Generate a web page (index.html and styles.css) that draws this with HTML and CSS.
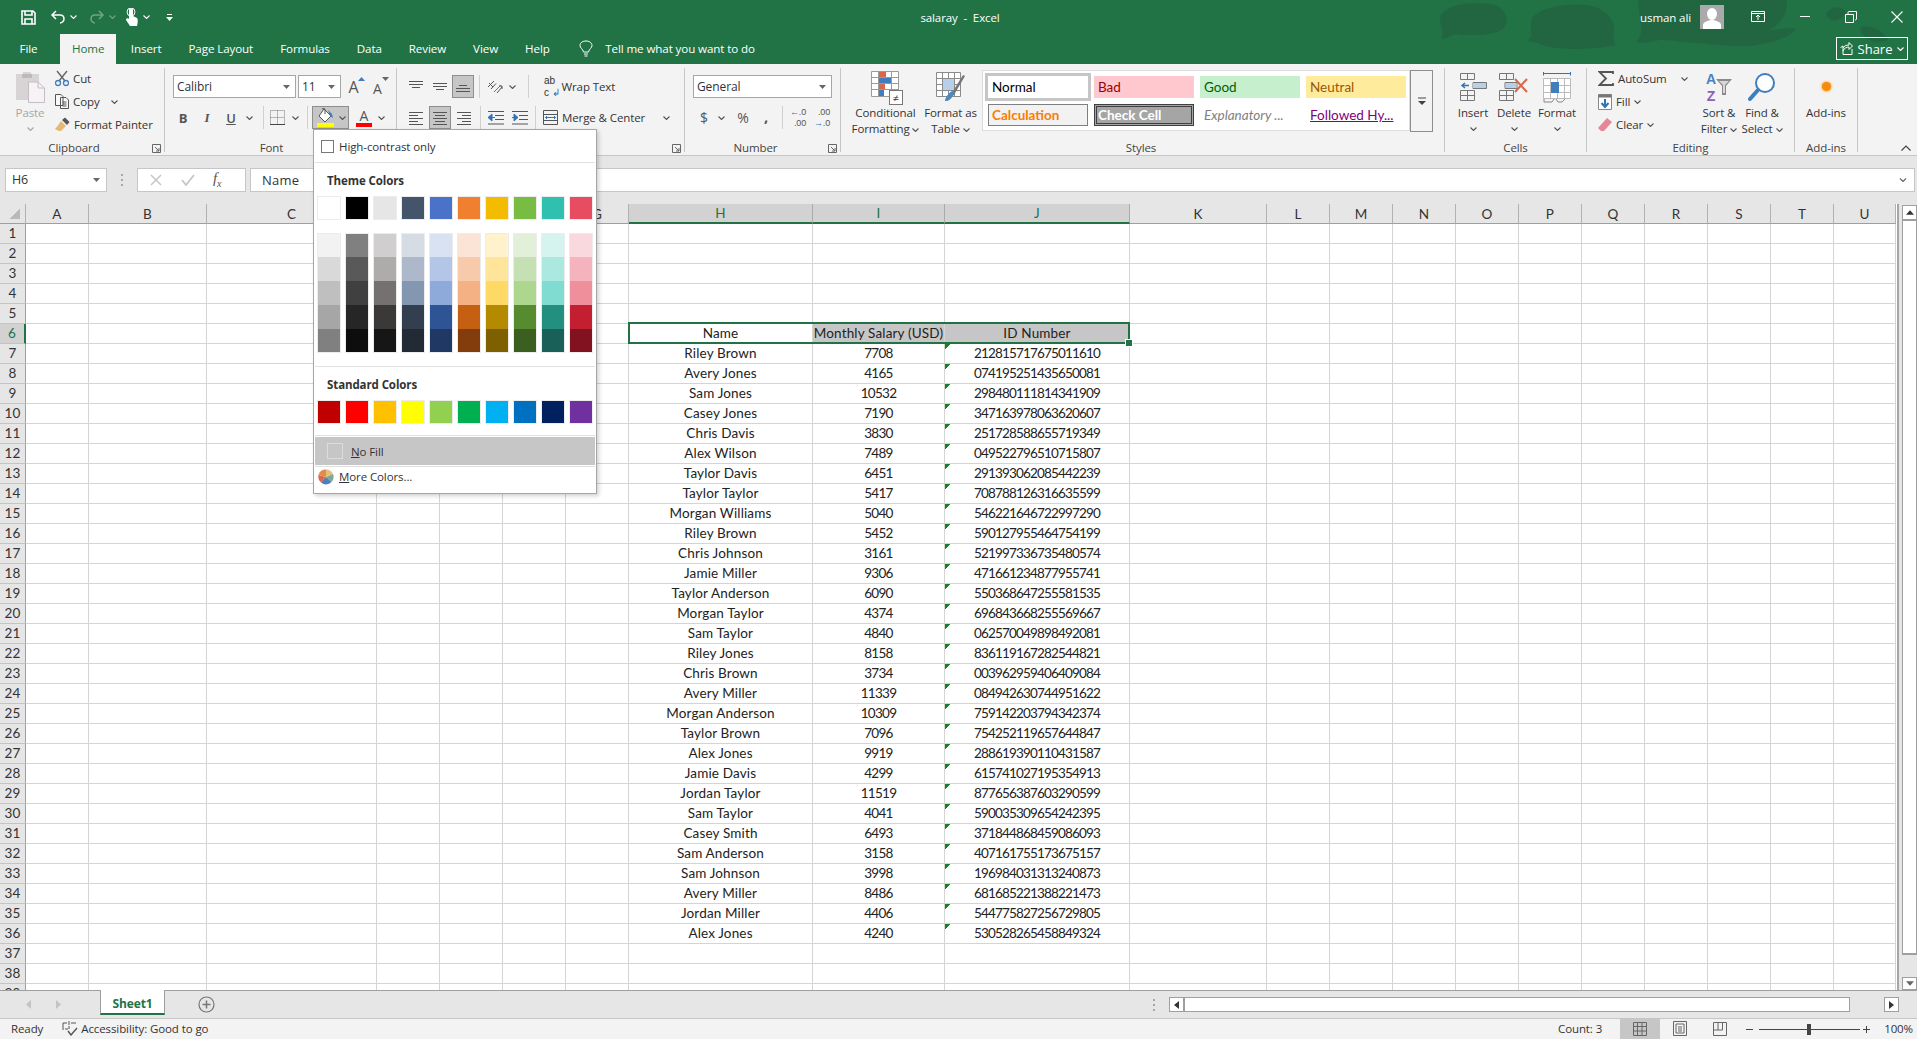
FILE: index.html
```html
<!DOCTYPE html>
<html lang="en">
<head>
    <meta charset="UTF-8">
    <title>salaray - Excel</title>
    <link rel="stylesheet" href="styles.css">
</head>
<body>

<svg class="sprite">
    <symbol id="chev" viewBox="0 0 7 4"><path d="M.5.5 3.5 3.5 6.5.5" fill="none" stroke="currentColor" stroke-width="1.1"/></symbol>
    <symbol id="launch" viewBox="0 0 9 9"><path d="M.5 8.5V.5H8.5V8.5Z M3 3 7 7 M7 4V7H4" fill="none" stroke="#666"/></symbol>
    <symbol id="tri" viewBox="0 0 7 4"><path d="M0 4 3.5 0 7 4Z" fill="currentColor"/></symbol>
    <symbol id="drop" viewBox="0 0 7 4"><path d="M0 0H7L3.5 4Z" fill="#666"/></symbol>
</svg>

<!-- Green header -->
<header class="head">
    <svg class="blobs" width="1917" height="64" viewBox="0 0 1917 64">
        <path d="M1440 18C1444 4 1470 2 1490 4 1506 6 1510 20 1504 28 1496 36 1470 36 1456 34 1448 37 1444 40 1441 38 1445 34 1440 26 1440 18Z"/>
        <path d="M1531 22C1534 8 1560 4 1585 5 1606 7 1615 20 1614 30 1612 42 1618 48 1612 46 1590 50 1560 50 1545 46 1538 42 1530 42 1527 40 1534 38 1530 30 1531 22Z"/>
        <path d="M1638 0H1786C1790 10 1780 26 1768 30 1780 30 1790 27 1796 29 1790 38 1770 43 1750 46 1720 47 1680 40 1660 40 1650 42 1640 44 1636 42 1642 36 1642 30 1640 20 1636 10 1638 0Z"/>
        <path d="M1826 14C1832 5 1842 6 1846 12 1842 22 1830 24 1826 14ZM1860 28C1864 24 1880 26 1888 40 1876 44 1864 42 1860 28Z"/>
    </svg>
    <div class="titlebar">
        <div class="qat">
            <svg class="qat-save" width="15" height="15" viewBox="0 0 15 15"><path d="M1 1H12L14 3V14H1Z M4 1V5H11V1 M4 14V9H11V14" fill="none" stroke="#fff" stroke-width="1.6"/></svg>
            <svg class="qat-undo" width="16" height="14" viewBox="0 0 16 14"><path d="M6 1 2 5 6 9 M2 5H10C13 5 14 7 14 9 14 11 12 13 10 13" fill="none" stroke="#fff" stroke-width="1.5"/></svg>
            <svg class="chev qat-chev"><use href="#chev"/></svg>
            <svg class="qat-redo" width="16" height="14" viewBox="0 0 16 14"><path d="M10 1 14 5 10 9 M14 5H6C3 5 2 7 2 9 2 11 4 13 6 13" fill="none" stroke="#6fa588" stroke-width="1.5"/></svg>
            <svg class="chev qat-chev dim"><use href="#chev"/></svg>
            <svg class="qat-touch" width="14" height="19" viewBox="0 0 14 19"><path d="M4 2C4 0 8 0 8 2V8L12 10C13 11 13 14 12 18H5L1 12C1 10 3 10 4 11Z" fill="#fff"/><circle cx="6" cy="4" r="4" fill="none" stroke="#fff" stroke-width="1"/></svg>
            <svg class="chev qat-chev"><use href="#chev"/></svg>
            <svg class="qat-more" width="7" height="7" viewBox="0 0 7 7"><path d="M1 .5H6" stroke="#fff"/><path d="M0 3H7L3.5 7Z" fill="#fff"/></svg>
        </div>
        <div class="doc-title">salaray &nbsp;-&nbsp; Excel</div>
        <div class="account">
            <span class="user-name">usman ali</span>
            <svg class="avatar" width="24" height="24" viewBox="0 0 24 24"><rect width="24" height="24" fill="#aaa"/><ellipse cx="12" cy="9" rx="5" ry="6" fill="#fff"/><path d="M3 24V20C3 17 8 16 10 15H14C16 16 21 17 21 20V24Z" fill="#fff"/></svg>
            <svg class="win win-display" width="14" height="12" viewBox="0 0 14 12"><path d="M.5 .5H13.5V10.5H.5Z M.5 2.5H13.5 M7 9V4 M5 6 7 4 9 6" fill="none" stroke="#fff"/></svg>
            <svg class="win" width="12" height="12" viewBox="0 0 12 12"><path d="M1 5.500H11" stroke="#fff"/></svg>
            <svg class="win" width="12" height="12" viewBox="0 0 12 12"><path d="M.5 3.500H8.500V11.500H.5Z M3 3V1.500C3 1 3.500 .5 4 .5H11.500V8C11.500 8.500 11 9 10 9" fill="none" stroke="#fff"/></svg>
            <svg class="win" width="12" height="12" viewBox="0 0 12 12"><path d="M.5 .5 11.500 11.500 M11.500 .5 .5 11.500" stroke="#fff" stroke-width="1.1"/></svg>
        </div>
    </div>
    <nav class="tabs">
        <a class="tab">File</a>
        <a class="tab active">Home</a>
        <a class="tab">Insert</a>
        <a class="tab">Page Layout</a>
        <a class="tab">Formulas</a>
        <a class="tab">Data</a>
        <a class="tab">Review</a>
        <a class="tab">View</a>
        <a class="tab">Help</a>
        <svg class="bulb" width="14" height="18" viewBox="0 0 14 18"><path d="M4.500 12C4 9 1 8 1 5.500 1 2.500 4 1 7 1 10 1 13 2.500 13 5.500 13 8 10 9 9.500 12Z M5 14H9 M5.500 16H8.500" fill="none" stroke="#fff"/></svg>
        <span class="tell">Tell me what you want to do</span>
        <button class="share">
            <svg width="13" height="13" viewBox="0 0 13 13"><path d="M.5 5.500 3 4V12.500H12V7 M3 9C4 6 7 5 9 5V7.500L12.500 4 9 .5V3C6 3 4 4 3 6" fill="none" stroke="#fff"/></svg>
            <span>Share</span>
            <svg class="chev"><use href="#chev"/></svg>
        </button>
    </nav>
</header>

<!-- Ribbon -->
<section class="ribbon">

    <div class="group g-clipboard">
        <div class="group-body">
            <div class="big-btn paste">
                <div class="big-icon">
                    <svg width="29" height="32" viewBox="0 0 29 32"><path d="M0 3H7V1H15V3H23V29H0Z" fill="#d8d4d6"/><path d="M6 3H16V7H6Z" fill="#bdb9bb"/><path d="M12.500 11H22L28.500 17V31.500H12.500Z" fill="#f6f2f6" stroke="#c2bec2"/><path d="M22 11V17H28.500" fill="none" stroke="#c2bec2"/></svg>
                </div>
                <span class="big-text">Paste</span>
                <svg class="chev"><use href="#chev"/></svg>
            </div>
            <div class="stack">
                <div class="stack-row">
                    <svg width="14" height="17" viewBox="0 0 14 17"><path d="M2 1 10 11 M12 1 4 11" stroke="#666" stroke-width="1.400"/><circle cx="3" cy="13" r="2.500" fill="none" stroke="#3f7dbd" stroke-width="1.300"/><circle cx="11" cy="13" r="2.500" fill="none" stroke="#3f7dbd" stroke-width="1.300"/></svg>
                    <span>Cut</span>
                </div>
                <div class="stack-row">
                    <svg width="14" height="15" viewBox="0 0 14 15"><path d="M.5 .5H6L8 2.500V11.500H.5Z M5.500 3.500H11L13.500 6V14.500H5.500Z M7.500 8H11.500 M7.500 10H11.500 M7.500 12H11.500" fill="#f8f8f8" stroke="#555"/></svg>
                    <span>Copy</span>
                    <svg class="chev copy-chev"><use href="#chev"/></svg>
                </div>
                <div class="stack-row">
                    <svg width="15" height="15" viewBox="0 0 15 15"><path d="M6 4 11 9 6 14 C4 14.500 2 13 0 12 2 10 4 7 6 4Z" fill="#e5b96f"/><path d="M7 3 10 0.500 14.500 5 12 8Z" fill="#555"/></svg>
                    <span>Format Painter</span>
                </div>
            </div>
        </div>
        <div class="group-label">Clipboard</div>
        <svg class="launcher"><use href="#launch"/></svg>
    </div>

    <div class="group g-font">
        <div class="group-body rows">
            <div class="ctl-row row-top">
                <div class="combo w-font"><span>Calibri</span><svg class="drop"><use href="#drop"/></svg></div>
                <div class="combo w-size"><span>11</span><svg class="drop"><use href="#drop"/></svg></div>
                <div class="btn w-24 font-size grow"><span>A</span><svg class="size-tri up"><use href="#tri"/></svg></div>
                <div class="btn w-24 font-size small"><span>A</span><svg class="size-tri down"><use href="#drop"/></svg></div>
            </div>
            <div class="ctl-row row-bottom">
                <div class="btn w-24 bold">B</div>
                <div class="btn w-24 italic">I</div>
                <div class="btn w-24 underline">U</div>
                <div class="btn w-12"><svg class="chev"><use href="#chev"/></svg></div>
                <i class="sep sep-font1"></i>
                <div class="btn w-22">
                    <svg width="15" height="15" viewBox="0 0 15 15"><path d="M.5 .5H14.500V14.500H.5Z M7.500 .5V14.500 M.5 7.500H14.500" fill="none" stroke="#777" stroke-dasharray="1 1"/><path d="M0 14.500H15" stroke="#444"/></svg>
                </div>
                <div class="btn w-14"><svg class="chev"><use href="#chev"/></svg></div>
                <i class="sep sep-font2"></i>
                <div class="btn fill-btn">
                    <svg width="19" height="19" viewBox="0 0 19 19"><path d="M8 1 15 8 9 14 3 8Z" fill="#fff" stroke="#555"/><path d="M6 1C7 0 9 0 9 2V6" fill="none" stroke="#555"/><path d="M12 2 16 6 17 10 14 8Z" fill="#3f7dbd"/><rect x="1" y="15" width="17" height="4" fill="#ffff00"/></svg>
                    <svg class="chev"><use href="#chev"/></svg>
                </div>
                <div class="btn color-a">
                    <span>A</span><i></i>
                </div>
                <div class="btn w-12 color-chev"><svg class="chev"><use href="#chev"/></svg></div>
            </div>
        </div>
        <div class="group-label">Font</div>
    </div>

    <div class="group g-align">
        <div class="group-body rows">
            <div class="ctl-row row-top">
                <div class="btn w-24"><svg class="lines" viewBox="0 0 14 14"><path d="M0 1.500H14 M0 4.500H14 M3 7.500H11" stroke="#555"/></svg></div>
                <div class="btn w-24"><svg class="lines" viewBox="0 0 14 14"><path d="M0 3.500H14 M0 6.500H14 M3 9.500H11" stroke="#555"/></svg></div>
                <div class="btn w-22 on"><svg class="lines" viewBox="0 0 14 14"><path d="M3 5.500H11 M0 8.500H14 M0 11.500H14" stroke="#555"/></svg></div>
                <i class="sep sep-align1"></i>
                <div class="btn w-22"><svg width="17" height="17" viewBox="0 0 17 17"><path d="M2 9 8 3 M5 11 10 5.500 M3 5 7 9 M11 15 16 9 M13 8 16 8 16 11" fill="none" stroke="#555"/><path d="M8 14 15 7" stroke="#3f7dbd"/></svg></div>
                <div class="btn w-14"><svg class="chev"><use href="#chev"/></svg></div>
                <i class="sep sep-align2"></i>
                <div class="wrap-text">
                    <span class="ab">ab<br>c <em>↲</em></span>
                    <span>Wrap Text</span>
                </div>
            </div>
            <div class="ctl-row row-bottom">
                <div class="btn w-24"><svg class="lines" viewBox="0 0 14 14"><path d="M0 1.500H14 M0 4.500H9 M0 7.500H14 M0 10.500H9 M0 13.500H14" stroke="#555"/></svg></div>
                <div class="btn w-22 on center-on"><svg class="lines" viewBox="0 0 14 14"><path d="M0 1.500H14 M2 4.500H12 M0 7.500H14 M2 10.500H12 M0 13.500H14" stroke="#555"/></svg></div>
                <div class="btn w-26"><svg class="lines" viewBox="0 0 14 14"><path d="M0 1.500H14 M5 4.500H14 M0 7.500H14 M5 10.500H14 M0 13.500H14" stroke="#555"/></svg></div>
                <i class="sep sep-align1"></i>
                <div class="btn w-24"><svg width="16" height="14" viewBox="0 0 16 14"><path d="M0 .5H16 M7 4.500H16 M7 8.500H16 M0 13H16" stroke="#555"/><path d="M0 6.500 4 3V10Z M3 6.500H7" fill="#2f75b5" stroke="#2f75b5"/></svg></div>
                <div class="btn w-24"><svg width="16" height="14" viewBox="0 0 16 14"><path d="M0 .5H16 M7 4.500H16 M7 8.500H16 M0 13H16" stroke="#555"/><path d="M6 6.500 2 3V10Z M0 6.500H4" fill="#2f75b5" stroke="#2f75b5"/></svg></div>
                <i class="sep sep-align3"></i>
                <div class="merge">
                    <svg width="15" height="15" viewBox="0 0 15 15"><path d="M.5 .5H14.500V14.500H.5Z M.5 4.500H14.500 M.5 10.500H14.500" fill="none" stroke="#555"/><path d="M2.500 7.500H12.500 M4 6 2.500 7.500 4 9 M11 6 12.500 7.500 11 9" fill="none" stroke="#2f75b5"/></svg>
                    <span>Merge &amp; Center</span>
                    <svg class="chev"><use href="#chev"/></svg>
                </div>
            </div>
        </div>
        <div class="group-label">Alignment</div>
        <svg class="launcher"><use href="#launch"/></svg>
    </div>

    <div class="group g-number">
        <div class="group-body rows">
            <div class="ctl-row row-top">
                <div class="combo w-format"><span>General</span><svg class="drop"><use href="#drop"/></svg></div>
            </div>
            <div class="ctl-row row-bottom">
                <div class="btn w-22 dollar">$</div>
                <div class="btn w-12"><svg class="chev"><use href="#chev"/></svg></div>
                <div class="btn w-24 percent">%</div>
                <div class="btn w-22 comma">,</div>
                <i class="sep sep-num"></i>
                <div class="btn w-24 decimals"><span><em>←</em>.0<br>.00</span></div>
                <div class="btn w-24 decimals"><span>.00<br><em>→</em>.0</span></div>
            </div>
        </div>
        <div class="group-label">Number</div>
        <svg class="launcher"><use href="#launch"/></svg>
    </div>

    <div class="group g-styles">
        <div class="group-body">
            <div class="big-btn w-cf">
                <div class="big-icon">
                    <svg width="30" height="31" viewBox="0 0 30 31"><path d="M.5 .5H27.500V25.500H.5Z M7.500 .5V25.500 M.5 6.500H27.500 M.5 12.500H27.500 M.5 18.500H27.500 M20.500 .5V20" fill="#fff" stroke="#9a9a9a"/><rect x="8" y="1" width="7" height="5" fill="#d9674a"/><rect x="8" y="7" width="12" height="5" fill="#3f7dbd"/><rect x="8" y="13" width="6" height="5" fill="#d9674a"/><rect x="8" y="19" width="5" height="6" fill="#3f7dbd"/></svg>
                    <span class="neq">≠</span>
                </div>
                <span class="big-text">Conditional<br>Formatting <svg class="chev"><use href="#chev"/></svg></span>
            </div>
            <div class="big-btn w-fat">
                <div class="big-icon">
                    <svg width="30" height="31" viewBox="0 0 30 31"><path d="M.5 1.500H24.500V25.500H.5Z M6.500 1.500V25.500 M12.500 1.500V25.500 M18.500 1.500V25.500 M.5 7.500H24.500 M.5 13.500H24.500 M.5 19.500H24.500" fill="#fff" stroke="#8a8a8a"/><rect x="7" y="8" width="11" height="11" fill="#b7cfe8"/><path d="M29 5 22 17 18 24C16 25 15 30 9 30 10 25 14 21 17 20L27 4Z" fill="#777"/><path d="M18 21C16 25 15 30 9 30 10 25 13 22 16 20Z" fill="#4a8ac8"/></svg>
                </div>
                <span class="big-text">Format as<br>Table <svg class="chev"><use href="#chev"/></svg></span>
            </div>
            <div class="gallery">
                <div class="style-cell s-normal">Normal</div>
                <div class="style-cell s-bad">Bad</div>
                <div class="style-cell s-good">Good</div>
                <div class="style-cell s-neutral">Neutral</div>
                <div class="style-cell s-calc">Calculation</div>
                <div class="style-cell s-check">Check Cell</div>
                <div class="style-cell s-expl">Explanatory ...</div>
                <div class="style-cell s-link">Followed Hy...</div>
            </div>
            <div class="gallery-more">
                <svg width="8" height="8" viewBox="0 0 8 8"><path d="M0 1H8" stroke="#444"/><path d="M0 4H8L4 8Z" fill="#444"/></svg>
            </div>
        </div>
        <div class="group-label">Styles</div>
    </div>

    <div class="group g-cells">
        <div class="group-body">
            <div class="big-btn w-insert">
                <div class="big-icon">
                    <svg width="27" height="28" viewBox="0 0 27 28"><path d="M.5 .5H14.500V6.500H.5Z M7.500 .5V6.500 M.5 17.500H14.500V27.500H.5Z M7.500 17.500V27.500 M.5 22.500H14.500 M13 9.500H26.500V15.500H13Z M20 9.500V15.500" fill="none" stroke="#777"/><rect x="13" y="10" width="13" height="5" fill="#b7cfe8"/><path d="M2 12.500H9 M5 10 2 12.500 5 15" fill="none" stroke="#2f75b5" stroke-width="1.500"/></svg>
                </div>
                <span class="big-text">Insert</span>
                <svg class="chev"><use href="#chev"/></svg>
            </div>
            <div class="big-btn w-delete">
                <div class="big-icon">
                    <svg width="30" height="28" viewBox="0 0 30 28"><path d="M.5 .5H14.500V6.500H.5Z M7.500 .5V6.500 M.5 17.500H14.500V27.500H.5Z M7.500 17.500V27.500 M.5 22.500H14.500 M6 9.500H18V15.500H6Z" fill="none" stroke="#777"/><rect x="7" y="10" width="10" height="5" fill="#b7cfe8"/><path d="M16 6 28 19 M28 6 16 19" stroke="#d9674a" stroke-width="2"/></svg>
                </div>
                <span class="big-text">Delete</span>
                <svg class="chev"><use href="#chev"/></svg>
            </div>
            <div class="big-btn w-format">
                <div class="big-icon">
                    <svg width="28" height="32" viewBox="0 0 28 32"><path d="M.5 4.500V1 M.5 2.500H27 M27.500 1V4.500" fill="none" stroke="#2f75b5"/><path d="M.5 7.500H27.500V27.500H.5Z M7.500 7.500V27.500 M14.500 7.500V27.500 M21.500 7.500V27.500 M.5 14.500H27.500 M.5 21.500H27.500" fill="#fff" stroke="#bbb"/><rect x="8" y="11" width="8" height="11" fill="#3f7dbd"/><path d="M1 28V31H9L11 28 M13 28 15 31H19L22 28" fill="none" stroke="#888"/></svg>
                </div>
                <span class="big-text">Format</span>
                <svg class="chev"><use href="#chev"/></svg>
            </div>
        </div>
        <div class="group-label">Cells</div>
    </div>

    <div class="group g-editing">
        <div class="group-body">
            <div class="stack stack-edit">
                <div class="stack-row">
                    <svg width="16" height="15" viewBox="0 0 16 15"><path d="M15 3V1H1.500L8 7.500 1.500 14H15V12" fill="none" stroke="#555" stroke-width="1.800"/></svg>
                    <span>AutoSum</span>
                    <svg class="chev sum-chev"><use href="#chev"/></svg>
                </div>
                <div class="stack-row">
                    <svg width="14" height="16" viewBox="0 0 14 16"><path d="M.5 .5H13.500V15.500H.5Z" fill="#fff" stroke="#888"/><path d="M.5 .5H13.500V3.500H.5Z" fill="#777"/><path d="M7 5V12 M3.500 9 7 13 10.500 9" fill="none" stroke="#2f75b5" stroke-width="2"/></svg>
                    <span>Fill</span>
                    <svg class="chev"><use href="#chev"/></svg>
                </div>
                <div class="stack-row">
                    <svg width="14" height="14" viewBox="0 0 14 14"><path d="M9 0 14 4 6 13 3 13 0 10Z" fill="#e8859a"/></svg>
                    <span>Clear</span>
                    <svg class="chev"><use href="#chev"/></svg>
                </div>
            </div>
            <div class="big-btn w-sort">
                <div class="big-icon sort-icon">
                    <span class="az"><b class="a">A</b><b class="z">Z</b></span>
                    <svg width="16" height="18" viewBox="0 0 16 18"><path d="M0 1H16L10 8V17H6V8Z" fill="#8a8a8a"/><path d="M3 3H13L9 7V15H7V7Z" fill="#d8d8d8"/></svg>
                </div>
                <span class="big-text">Sort &amp;<br>Filter <svg class="chev"><use href="#chev"/></svg></span>
            </div>
            <div class="big-btn w-find">
                <div class="big-icon">
                    <svg width="28" height="30" viewBox="0 0 28 30"><circle cx="17" cy="11" r="9" fill="#fff" stroke="#3f7dbd" stroke-width="2"/><path d="M10 18 2 27" stroke="#3f7dbd" stroke-width="4" stroke-linecap="round"/></svg>
                </div>
                <span class="big-text">Find &amp;<br>Select <svg class="chev"><use href="#chev"/></svg></span>
            </div>
        </div>
        <div class="group-label">Editing</div>
    </div>

    <div class="group g-addins">
        <div class="group-body">
            <div class="big-btn w-addins">
                <div class="big-icon"><i class="addin-dot"></i></div>
                <span class="big-text">Add-ins</span>
            </div>
        </div>
        <div class="group-label">Add-ins</div>
    </div>

    <svg class="collapse" width="10" height="6" viewBox="0 0 10 6"><path d="M.5 5.500 5 1 9.500 5.500" fill="none" stroke="#444" stroke-width="1.200"/></svg>
</section>

<!-- Name box and formula bar -->
<div class="formula-row">
    <div class="name-box"><span>H6</span><svg class="drop"><use href="#drop"/></svg></div>
    <div class="dots"><i></i><i></i><i></i></div>
    <div class="fx-box">
        <svg width="12" height="12" viewBox="0 0 12 12"><path d="M1 1 11 11 M11 1 1 11" stroke="#c6c6c6" stroke-width="1.500"/></svg>
        <svg width="14" height="12" viewBox="0 0 14 12"><path d="M1 6 5 11 13 1" fill="none" stroke="#c6c6c6" stroke-width="1.800"/></svg>
        <span class="fx">f<sub>x</sub></span>
    </div>
    <div class="formula-input">
        <span>Name</span>
        <svg class="chev"><use href="#chev"/></svg>
    </div>
</div>

<!-- Worksheet -->
<main class="sheet">
    <div class="grid-wrap">
        <table class="grid" id="grid"></table>
        <div class="selection"><i class="handle"></i></div>
    </div>
    <div class="vscroll">
        <div class="sb-btn"><svg class="sb-arrow"><use href="#tri"/></svg></div>
        <div class="vthumb"></div>
        <div class="sb-btn down"><svg class="sb-arrow"><use href="#drop"/></svg></div>
    </div>
</main>

<!-- Sheet tabs -->
<div class="tabbar">
    <div class="tab-nav">
        <svg width="6" height="9" viewBox="0 0 6 9"><path d="M5 0V9L0 4.500Z" fill="#c4c4c4"/></svg>
        <svg width="6" height="9" viewBox="0 0 6 9"><path d="M1 0V9L6 4.500Z" fill="#c4c4c4"/></svg>
    </div>
    <div class="sheet-tab">Sheet1</div>
    <svg class="add-sheet" width="17" height="17" viewBox="0 0 17 17"><circle cx="8.500" cy="8.500" r="7.500" fill="none" stroke="#777" stroke-width="1.200"/><path d="M8.500 4.500V12.500 M4.500 8.500H12.500" stroke="#777" stroke-width="1.500"/></svg>
    <div class="dots tab-dots"><i></i><i></i><i></i></div>
    <div class="hscroll">
        <div class="sb-btn h"><svg width="5" height="8" viewBox="0 0 5 8"><path d="M5 0V8L0 4Z" fill="#333"/></svg></div>
        <div class="hthumb"></div>
        <div class="sb-btn h"><svg width="5" height="8" viewBox="0 0 5 8"><path d="M0 0V8L5 4Z" fill="#333"/></svg></div>
    </div>
</div>

<!-- Status bar -->
<footer class="status">
    <span class="ready">Ready</span>
    <svg class="access" width="16" height="15" viewBox="0 0 16 15"><path d="M7 0V4 M5 2H1V9 M9 2H14 M1 12 M7 5V8 M3 8H6" fill="none" stroke="#555"/><path d="M6 10 9 14 15 7" fill="none" stroke="#555" stroke-width="1.400"/></svg>
    <span>Accessibility: Good to go</span>
    <span class="count">Count: 3</span>
    <div class="view on">
        <svg width="14" height="14" viewBox="0 0 14 14"><path d="M.5 .5H13.500V13.500H.5Z M4.500 .5V13.500 M9 .5V13.500 M.5 4.500H13.500 M.5 9H13.500" fill="none" stroke="#666"/></svg>
    </div>
    <div class="view">
        <svg width="14" height="15" viewBox="0 0 14 15"><path d="M.5 .5H13.500V14.500H.5Z M3 3H11V12H3Z M5 6H9 M5 8H9 M5 10H9" fill="none" stroke="#666"/></svg>
    </div>
    <div class="view">
        <svg width="14" height="14" viewBox="0 0 14 14"><path d="M.5 .5H13.500V13.500H.5Z M5 .5V8H9.500V.5 M.5 8H5" fill="none" stroke="#666"/></svg>
    </div>
    <svg class="zoom" width="125" height="14" viewBox="0 0 125 14"><path d="M1 7.500H8 M14 7.500H115 M118 7.500H125 M121.500 4V11" stroke="#444"/><rect x="62" y="2" width="4" height="11" fill="#444"/></svg>
    <span class="zoom-pct">100%</span>
</footer>

<!-- Fill color menu, open over the ribbon and the sheet -->
<div class="color-menu">
    <label class="hc-row"><i class="check"></i><span>High-contrast only</span></label>
    <div class="menu-title">Theme Colors</div>
    <div class="swatch-row" id="theme-row"></div>
    <div class="shade-row" id="shade-row"></div>
    <div class="menu-title std">Standard Colors</div>
    <div class="swatch-row" id="std-row"></div>
    <div class="no-fill"><i class="nofill-box"></i><span><u>N</u>o Fill</span></div>
    <div class="more-colors">
        <svg width="16" height="16" viewBox="0 0 16 16"><path d="M8 8 8 .5A7.500 7.500 0 0 1 15 5Z" fill="#e6c07a"/><path d="M8 8 15 5A7.500 7.500 0 0 1 13.500 13Z" fill="#7fa898"/><path d="M8 8 13.500 13A7.500 7.500 0 0 1 3 13.500Z" fill="#4a80bd"/><path d="M8 8 3 13.500A7.500 7.500 0 0 1 .5 6Z" fill="#d9674a"/><path d="M8 8 .5 6A7.500 7.500 0 0 1 8 .5Z" fill="#e08c4a"/></svg>
        <span><u>M</u>ore Colors...</span>
    </div>
</div>

<script src="sheet.js"></script>
</body>
</html>
```

FILE: styles.css
```css
* {
    box-sizing: border-box;
}
html, body {
    height: 100%;
}
body {
    margin: 0;
    width: 1917px;
    height: 1039px;
    overflow: hidden;
    position: relative;
    display: flex;
    flex-direction: column;
    background: #e6e6e6;
    color: #333;
    font-family: "Open Sans", sans-serif;
    font-size: 11.5px;
    letter-spacing: -0.1px;
}
svg {
    display: block;
    flex: none;
}
.sprite {
    display: none;
}
.chev {
    width: 7px;
    height: 4px;
    color: #555;
}
.drop {
    width: 7px;
    height: 4px;
}

/* Green header */
.head {
    position: relative;
    height: 64px;
    flex: none;
    background: #217346;
    color: #fff;
}
.blobs {
    position: absolute;
    top: 0;
    left: 0;
    fill: #226641;
}
.titlebar {
    position: relative;
    height: 34px;
    display: grid;
    grid-template-columns: 1fr auto 1fr;
    align-items: center;
}
.qat {
    display: flex;
    align-items: center;
    padding-left: 21px;
}
.qat .chev {
    color: #fff;
}
.qat .chev.dim {
    color: #6fa588;
}
.qat-undo { margin-left: 14px; }
.qat-chev { margin-left: 4px; }
.qat-redo { margin-left: 12px; }
.qat-touch { margin-left: 9px; }
.qat-more { margin-left: 16px; }
.doc-title {
    font-size: 11.5px;
    color: #fff;
    margin-left: 3px;
}
.account {
    display: flex;
    align-items: center;
    justify-content: flex-end;
    padding-right: 14px;
    height: 34px;
}
.user-name {
    font-size: 11.5px;
    letter-spacing: -0.1px;
    margin-right: 9px;
}
.win {
    margin-left: 34px;
}
.win-display {
    margin-left: 27px;
}

.tabs {
    position: relative;
    height: 30px;
    display: flex;
    align-items: stretch;
    padding-left: 6px;
}
.tab {
    display: flex;
    align-items: center;
    padding: 0 13.5px 1px;
    color: #fff;
    font-size: 11.6px;
}
.tab.active {
    background: #f3f3f3;
    color: #217346;
    margin: 0 1px 0 9px;
    padding: 0 12px 1px;
}
.bulb {
    align-self: center;
    margin-left: 16px;
}
.tell {
    align-self: center;
    margin: 0 0 2px 12px;
    font-size: 11.6px;
}
.share {
    margin: 3px 9px 4px auto;
    width: 72px;
    display: flex;
    align-items: center;
    justify-content: center;
    gap: 5px;
    background: none;
    border: 1px solid #fff;
    color: #fff;
    font-family: inherit;
    font-size: 13px;
    padding: 0;
}
.share .chev {
    color: #fff;
}

/* Ribbon */
.ribbon {
    position: relative;
    flex: none;
    height: 92px;
    background: #f3f3f3;
    border-bottom: 1px solid #c6c6c6;
    display: flex;
    padding-top: 4px;
}
.group {
    position: relative;
    height: 84px;
    border-right: 1px solid #c6c6c6;
    flex: none;
}
.group-body {
    height: 72px;
    display: flex;
}
.group-body.rows {
    display: block;
    padding-top: 7px;
}
.group-label {
    height: 16px;
    line-height: 16px;
    text-align: center;
    color: #444;
}
.launcher {
    position: absolute;
    right: 3px;
    bottom: -1px;
    width: 9px;
    height: 9px;
}
.g-clipboard { width: 165px; }
.g-font { width: 232px; padding-left: 6px; }
.g-align { width: 288px; padding-left: 7px; }
.g-number { width: 156px; padding-left: 8px; }
.g-styles { width: 604px; padding-left: 11px; }
.g-cells { width: 142px; }
.g-editing { width: 208px; padding-left: 11px; }
.g-addins { width: 63px; }

.g-clipboard .group-label { padding-right: 16px; }
.g-font .group-label { margin-left: -6px; padding-right: 18px; }
.g-align .group-label { visibility: hidden; }
.g-number .group-label { margin-left: -8px; padding-right: 14px; }
.g-styles .group-label { margin-left: -11px; padding-right: 3px; }
.g-editing .group-label { margin-left: -11px; }

.big-btn {
    display: flex;
    flex-direction: column;
    align-items: center;
    text-align: center;
    flex: none;
    line-height: 16px;
}
.big-icon {
    position: relative;
    height: 37px;
    display: flex;
    align-items: center;
    justify-content: center;
}
.big-text {
    white-space: nowrap;
}
.big-text .chev {
    display: inline-block;
    vertical-align: middle;
}
.big-btn > .chev {
    margin-top: 6px;
}
.paste {
    width: 50px;
    margin-left: 5px;
    color: #a6a6a6;
}
.paste .chev {
    color: #a6a6a6;
}
.stack {
    width: 109px;
    margin-top: -1px;
}
.stack-row {
    height: 23px;
    display: flex;
    align-items: center;
    gap: 4px;
}
.copy-chev {
    margin-left: 7px;
}
.stack-edit {
    width: 101px;
}
.sum-chev {
    margin-left: 10px;
}
.w-cf { width: 67px; }
.w-fat { width: 63px; }
.w-insert { width: 46px; margin-left: 5px; }
.w-delete { width: 36px; }
.w-format { width: 46px; margin-left: 2px; }
.w-sort { width: 40px; }
.w-find { width: 46px; }
.w-addins { width: 62px; }
.neq {
    position: absolute;
    right: -2px;
    bottom: 0;
    width: 14px;
    height: 15px;
    background: #fff;
    border: 1px solid #777;
    font-size: 11px;
    line-height: 13px;
    text-align: center;
}
.sort-icon {
    gap: 0;
    align-items: flex-start;
    padding-top: 3px;
}
.az {
    display: flex;
    flex-direction: column;
    font-family: "Liberation Sans", sans-serif;
    font-size: 14px;
    line-height: 16.5px;
}
.az .a { color: #4a80bd; }
.az .z { color: #8e5fb0; }
.sort-icon svg {
    margin-top: 7px;
}
.addin-dot {
    display: block;
    width: 9px;
    height: 9px;
    margin-top: -1px;
    border-radius: 50%;
    background: #f58a0c;
    box-shadow: 0 0 2px 1px #fbbf78;
}

.ctl-row {
    display: flex;
    align-items: center;
}
.row-top {
    height: 23px;
}
.row-bottom {
    height: 23px;
    margin-top: 8px;
}
.combo {
    height: 23px;
    background: #fff;
    border: 1px solid #a6a6a6;
    display: flex;
    align-items: center;
    justify-content: space-between;
    padding: 0 5px 0 3px;
    font-size: 12px;
    flex: none;
}
.w-font { width: 123px; margin-left: 2px; }
.w-size { width: 43px; margin-left: 2px; }
.combo.w-format { width: 139px; margin-left: 0; }
.btn {
    height: 23px;
    flex: none;
    display: flex;
    align-items: center;
    justify-content: center;
    color: #555;
}
.btn .chev {
    color: #555;
}
.w-12 { width: 12px; }
.w-14 { width: 14px; }
.w-22 { width: 22px; }
.w-24 { width: 24px; }
.w-26 { width: 26px; }
.btn.on {
    background: #c6c6c6;
    border: 1px solid #8e8e8e;
}
.lines {
    width: 14px;
    height: 14px;
}
.center-on { margin-left: 1px; }
.font-size {
    position: relative;
    font-size: 16px;
    align-items: flex-end;
    padding-right: 5px;
}
.font-size.grow {
    margin-left: 3px;
}
.font-size.small {
    font-size: 14px;
}
.size-tri {
    position: absolute;
    right: 3px;
    top: 2px;
    width: 7px;
    height: 4px;
    color: #3f7dbd;
}
.bold {
    font-weight: 700;
    font-size: 13px;
}
.italic {
    font-style: italic;
    font-size: 13px;
    font-family: "Liberation Serif", serif;
    font-weight: 700;
}
.underline {
    text-decoration: underline;
    font-weight: 600;
    font-size: 13px;
}
.sep {
    display: block;
    width: 1px;
    height: 23px;
    background: #d0d0d0;
    flex: none;
}
.sep-font1 { margin: 0 2px 0 8px; }
.sep-font2 { margin: 0 4px 0 5px; }
.fill-btn {
    width: 37px;
    background: #c6c6c6;
    border: 1px solid #8e8e8e;
    gap: 4px;
    padding-left: 1px;
}
.color-a {
    width: 26px;
    flex-direction: column;
    padding: 0;
    margin-left: 2px;
    font-size: 14px;
    line-height: 15px;
}
.color-a i {
    display: block;
    width: 16px;
    height: 4px;
    background: #ff0000;
}
.color-chev {
    margin-left: -2px;
}
.sep-align1 { margin: 0 3px 0 5px; }
.sep-align2 { margin: 0 7px 0 9px; }
.sep-align3 { margin: 0 7px 0 3px; }
.g-align .row-bottom .w-26 + .sep { margin-left: 3px; }
.wrap-text, .merge {
    display: flex;
    align-items: center;
    white-space: nowrap;
}
.wrap-text {
    gap: 2px;
    margin-left: 8px;
}
.ab {
    font-family: "Liberation Sans", sans-serif;
    line-height: 12px;
    font-size: 10px;
}
.ab em {
    color: #2f75b5;
    font-style: normal;
}
.merge {
    gap: 4px;
}
.merge .chev {
    margin-left: 14px;
}
.dollar {
    font-size: 14px;
}
.percent {
    font-size: 14px;
    margin-left: 4px;
}
.comma {
    font-size: 15px;
    font-weight: 700;
    align-items: flex-start;
}
.sep-num { margin: 0 3px 0 5px; }
.decimals {
    font-family: "Liberation Sans", sans-serif;
    font-size: 9px;
    line-height: 11px;
    text-align: right;
}
.decimals em {
    color: #2f75b5;
    font-style: normal;
}

.gallery {
    width: 428px;
    height: 61px;
    flex: none;
    margin-top: 2px;
    padding: 5px 0 0 5px;
    background: #fff;
    border: 1px solid #dcdcdc;
    display: grid;
    grid-template-columns: repeat(4, 100px);
    grid-auto-rows: 22px;
    gap: 6px;
    font-family: Lato, sans-serif;
    font-size: 13.5px;
    letter-spacing: 0;
}
.gallery-more {
    width: 23px;
    height: 62px;
    margin-top: 2px;
    flex: none;
    border: 1px solid #8e8e8e;
    display: flex;
    align-items: center;
    justify-content: center;
}
.style-cell {
    line-height: 22px;
    padding-left: 4px;
    white-space: nowrap;
    overflow: hidden;
}
.s-normal { box-shadow: 0 0 0 3px #c6c6c6; color: #000; }
.s-bad { background: #ffc7ce; color: #9c0006; }
.s-good { background: #c6efce; color: #006100; }
.s-neutral { background: #ffeb9c; color: #9c5700; }
.s-calc {
    background: #f2f2f2;
    border: 1px solid #7f7f7f;
    color: #fa7d00;
    font-weight: 700;
    line-height: 20px;
    padding-left: 3px;
}
.s-check {
    background: #a5a5a5;
    border: 3px double #3f3f3f;
    color: #fff;
    font-weight: 700;
    line-height: 16px;
    padding-left: 1px;
}
.s-expl { color: #7f7f7f; font-style: italic; }
.s-link { color: #800080; text-decoration: underline; }
.collapse {
    position: absolute;
    right: 6px;
    bottom: 4px;
}

/* Formula bar */
.formula-row {
    flex: none;
    height: 48px;
    display: flex;
    align-items: center;
    padding: 0 2px 1px 5px;
    background: #e6e6e6;
}
.name-box, .fx-box, .formula-input {
    height: 24px;
    background: #fff;
    border: 1px solid #c6c6c6;
    display: flex;
    align-items: center;
}
.name-box {
    width: 102px;
    justify-content: space-between;
    padding: 0 6px;
    font-size: 12.5px;
}
.dots {
    width: 30px;
    display: flex;
    flex-direction: column;
    align-items: center;
    gap: 3px;
}
.dots i {
    display: block;
    width: 2px;
    height: 2px;
    background: #a6a6a6;
}
.fx-box {
    width: 109px;
    padding-left: 12px;
    gap: 19px;
}
.fx {
    font-family: "Liberation Serif", serif;
    font-style: italic;
    font-size: 15px;
    color: #555;
    margin-left: -1px;
}
.fx sub {
    font-size: 10px;
}
.formula-input {
    flex: 1;
    margin-left: 4px;
    padding: 0 7px 0 11px;
    justify-content: space-between;
    font-size: 13px;
    letter-spacing: 0.2px;
}
.formula-input .chev {
    width: 8px;
    color: #666;
}

/* Worksheet */
.sheet {
    flex: 1;
    min-height: 0;
    display: flex;
    overflow: hidden;
}
.grid-wrap {
    position: relative;
    width: 1899px;
    flex: none;
    background: #fff;
    border-right: 2px solid #a6a6a6;
    overflow: hidden;
}
.grid {
    width: 1896px;
    table-layout: fixed;
    border-collapse: separate;
    border-spacing: 0;
    font-family: Lato, sans-serif;
    font-size: 13.5px;
    letter-spacing: 0.15px;
}
.grid th, .grid td {
    padding: 0;
    white-space: nowrap;
    overflow: hidden;
}
.grid td {
    height: 20px;
    line-height: 19px;
    background: #fff;
    border-right: 1px solid #d4d4d4;
    border-bottom: 1px solid #d4d4d4;
    text-align: center;
    color: #222;
}
.grid thead th {
    height: 19px;
    line-height: 18px;
    background: #e6e6e6;
    border-right: 1px solid #b1b1b1;
    border-bottom: 1px solid #9f9f9f;
    font-weight: 400;
    color: #333;
}
.grid tbody th {
    height: 20px;
    line-height: 19px;
    background: #e6e6e6;
    border-right: 1px solid #9f9f9f;
    border-bottom: 1px solid #c4c4c4;
    font-weight: 400;
    color: #333;
}
.grid thead th.corner {
    background: linear-gradient(135deg, #e6e6e6 50%, #b9b9b9 50%) 9px 4px / 11px 11px no-repeat, #e6e6e6;
}
.grid thead th.picked {
    background: #d2d2d2;
    color: #217346;
    border-bottom: 2px solid #217346;
    border-right-color: #ababab;
}
.grid tbody th.picked {
    background: #d2d2d2;
    color: #217346;
    border-right: 2px solid #217346;
}
.grid td.filled {
    background: #c6c6c6;
}
.grid td.salary {
    letter-spacing: -0.7px;
}
.grid td.text-number {
    background: linear-gradient(135deg, #0f8a1a 4.2px, transparent 4.2px) 0 0 / 7px 7px no-repeat, #fff;
    letter-spacing: -0.83px;
}
.selection {
    position: absolute;
    left: 628px;
    top: 118px;
    width: 502px;
    height: 22px;
    border: 2px solid #217346;
}
.handle {
    position: absolute;
    right: -4px;
    bottom: -4px;
    width: 6px;
    height: 6px;
    background: #217346;
    box-shadow: 0 0 0 1px #fff;
}
.vscroll {
    flex: 1;
    padding: 1px 0 0 3px;
    display: flex;
    flex-direction: column;
    background: #e6e6e6;
}
.sb-btn {
    height: 15px;
    flex: none;
    background: #fff;
    border: 1px solid #9f9f9f;
    display: flex;
    align-items: center;
    justify-content: center;
}
.sb-btn.down {
    margin-top: 22px;
    height: 13px;
}
.sb-arrow {
    width: 8px;
    height: 5px;
    color: #333;
}
.vthumb {
    height: 735px;
    flex: none;
    background: #fff;
    border: 1px solid #9f9f9f;
    border-width: 1px 1px 2px;
}

/* Sheet tabs */
.tabbar {
    flex: none;
    height: 28px;
    display: flex;
    align-items: center;
    background: #e6e6e6;
    border-top: 1px solid #9f9f9f;
}
.tab-nav {
    width: 100px;
    display: flex;
    gap: 23px;
    padding-left: 26px;
}
.sheet-tab {
    align-self: flex-start;
    width: 65px;
    height: 25px;
    margin-top: -1px;
    background: #fff;
    border: 1px solid #9f9f9f;
    border-top: 0;
    border-bottom: 2px solid #217346;
    color: #217346;
    font-weight: 700;
    font-size: 12px;
    line-height: 27px;
    text-align: center;
}
.add-sheet {
    margin-left: 33px;
}
.tab-dots {
    width: 3px;
    margin-left: auto;
}
.hscroll {
    width: 730px;
    height: 15px;
    margin: 0 18px 0 14px;
    display: flex;
}
.sb-btn.h {
    width: 15px;
    height: 15px;
}
.hthumb {
    width: 666px;
    height: 15px;
    background: #fff;
    border: 1px solid #9f9f9f;
    margin-right: 34px;
}

/* Status bar */
.status {
    flex: none;
    height: 21px;
    display: flex;
    align-items: center;
    padding-bottom: 1px;
    background: #f3f3f3;
    border-top: 1px solid #c6c6c6;
    font-size: 11.5px;
    white-space: nowrap;
}
.ready {
    margin-left: 11px;
}
.access {
    margin: 0 3px 0 19px;
}
.count {
    margin-left: auto;
    margin-right: 18px;
}
.view {
    width: 40px;
    height: 20px;
    display: flex;
    align-items: center;
    justify-content: center;
}
.view.on {
    background: #c6c6c6;
}
.zoom {
    margin-left: 5px;
}
.zoom-pct {
    margin: 0 4px 0 14px;
}

/* Fill color menu */
.color-menu {
    position: absolute;
    left: 313px;
    top: 129px;
    width: 284px;
    height: 365px;
    background: #fff;
    border: 1px solid #a6a6a6;
    box-shadow: 2px 2px 4px rgba(0,0,0,0.18);
    padding: 0 1px;
}
.hc-row {
    height: 33px;
    display: flex;
    align-items: center;
    gap: 5px;
    padding-left: 6px;
    border-bottom: 1px solid #e1e1e1;
}
.check {
    display: block;
    width: 13px;
    height: 13px;
    background: #fff;
    border: 1px solid #777;
}
.menu-title {
    height: 33px;
    line-height: 35px;
    padding-left: 12px;
    font-weight: 700;
    color: #333;
}
.menu-title.std {
    height: 34px;
    margin-top: 13px;
    border-top: 1px solid #e1e1e1;
}
.swatch-row {
    display: flex;
    gap: 4px;
    padding-left: 2px;
}
.swatch {
    display: block;
    width: 24px;
    height: 24px;
    border: 1px solid #ececec;
}
.shade-row {
    display: flex;
    gap: 4px;
    padding-left: 2px;
    margin-top: 13px;
}
.shade-col {
    width: 24px;
    border: 1px solid #ececec;
}
.shade-col i {
    display: block;
    height: 24px;
}
.shade-col i:first-child {
    height: 23px;
}
.shade-col i:last-child {
    height: 23px;
}
.no-fill {
    height: 28px;
    margin-top: 13px;
    background: #c6c6c6;
    display: flex;
    align-items: center;
    gap: 8px;
    padding-left: 12px;
    position: relative;
}
.no-fill::before {
    content: "";
    position: absolute;
    left: 0;
    right: 0;
    top: -2px;
    height: 1px;
    background: #e1e1e1;
}
.nofill-box {
    display: block;
    width: 16px;
    height: 16px;
    border: 1px solid #dcdcdc;
}
.more-colors {
    height: 20px;
    margin-top: 1px;
    border-top: 1px solid #e1e1e1;
    display: flex;
    align-items: center;
    gap: 5px;
    padding-left: 3px;
}
```

FILE: sheet.js
```js
const columns = [
    ['A', 63], ['B', 118], ['C', 170], ['D', 63], ['E', 63], ['F', 63], ['G', 63],
    ['H', 184], ['I', 132], ['J', 185], ['K', 137], ['L', 63], ['M', 63], ['N', 63],
    ['O', 63], ['P', 63], ['Q', 63], ['R', 63], ['S', 63], ['T', 63], ['U', 62]
];
const HEADER_ROW = 6;
const TOTAL_ROWS = 39;

const people = [
    ['Riley Brown', 7708, '212815717675011610'],
    ['Avery Jones', 4165, '074195251435650081'],
    ['Sam Jones', 10532, '298480111814341909'],
    ['Casey Jones', 7190, '347163978063620607'],
    ['Chris Davis', 3830, '251728588655719349'],
    ['Alex Wilson', 7489, '049522796510715807'],
    ['Taylor Davis', 6451, '291393062085442239'],
    ['Taylor Taylor', 5417, '708788126316635599'],
    ['Morgan Williams', 5040, '546221646722997290'],
    ['Riley Brown', 5452, '590127955464754199'],
    ['Chris Johnson', 3161, '521997336735480574'],
    ['Jamie Miller', 9306, '471661234877955741'],
    ['Taylor Anderson', 6090, '550368647255581535'],
    ['Morgan Taylor', 4374, '696843668255569667'],
    ['Sam Taylor', 4840, '062570049898492081'],
    ['Riley Jones', 8158, '836119167282544821'],
    ['Chris Brown', 3734, '003962959406409084'],
    ['Avery Miller', 11339, '084942630744951622'],
    ['Morgan Anderson', 10309, '759142203794342374'],
    ['Taylor Brown', 7096, '754252119657644847'],
    ['Alex Jones', 9919, '288619390110431587'],
    ['Jamie Davis', 4299, '615741027195354913'],
    ['Jordan Taylor', 11519, '877656387603290599'],
    ['Sam Taylor', 4041, '590035309654242395'],
    ['Casey Smith', 6493, '371844868459086093'],
    ['Sam Anderson', 3158, '407161755173675157'],
    ['Sam Johnson', 3998, '196984031313240873'],
    ['Avery Miller', 8486, '681685221388221473'],
    ['Jordan Miller', 4406, '544775827256729805'],
    ['Alex Jones', 4240, '530528265458849324']
];

const themeColors = ['#ffffff', '#000000', '#e6e6e6', '#44546a', '#4a72c8', '#f08030', '#f4bc00', '#78bc44', '#30c0b0', '#e84c60'];
const themeShades = [
    ['#f2f2f2', '#d9d9d9', '#bfbfbf', '#a6a6a6', '#808080'],
    ['#808080', '#595959', '#404040', '#262626', '#0d0d0d'],
    ['#d0cece', '#aeabab', '#767171', '#3b3838', '#171616'],
    ['#d6dce4', '#adb9ca', '#8497b0', '#333f4f', '#222b35'],
    ['#d9e2f3', '#b4c6e7', '#8eaadb', '#2f5496', '#1f3864'],
    ['#fbe4d5', '#f7caac', '#f4b183', '#c55f11', '#833c0b'],
    ['#fff2cc', '#ffe599', '#ffd966', '#b38a00', '#7f6000'],
    ['#e2efd9', '#c5e0b3', '#add68f', '#568c2f', '#3a5f20'],
    ['#d5f4f0', '#aae8e0', '#80dcd0', '#23907f', '#186058'],
    ['#fad9de', '#f5b3bd', '#f08f9c', '#c41f30', '#831220']
];
const standardColors = ['#c00000', '#ff0000', '#ffc000', '#ffff00', '#92d050', '#00b050', '#00b0f0', '#0070c0', '#002060', '#7030a0'];

function buildGrid() {
    const colgroup = ['<col style="width:26px">'];
    let head = '<th class="corner"></th>';
    columns.forEach(([letter, width]) => {
        colgroup.push(`<col style="width:${width}px">`);
        const picked = 'HIJ'.includes(letter) ? ' class="picked"' : '';
        head += `<th${picked}>${letter}</th>`;
    });

    let body = '';
    for (let row = 1; row <= TOTAL_ROWS; row++) {
        const person = people[row - HEADER_ROW - 1];
        let cells = `<th${row === HEADER_ROW ? ' class="picked"' : ''}>${row}</th>`;
        columns.forEach(([letter]) => {
            if (row === HEADER_ROW && letter === 'H') cells += '<td>Name</td>';
            else if (row === HEADER_ROW && letter === 'I') cells += '<td class="filled">Monthly Salary (USD)</td>';
            else if (row === HEADER_ROW && letter === 'J') cells += '<td class="filled">ID Number</td>';
            else if (person && letter === 'H') cells += `<td>${person[0]}</td>`;
            else if (person && letter === 'I') cells += `<td class="salary">${person[1]}</td>`;
            else if (person && letter === 'J') cells += `<td class="text-number">${person[2]}</td>`;
            else cells += '<td></td>';
        });
        body += `<tr>${cells}</tr>`;
    }

    document.getElementById('grid').innerHTML =
        `<colgroup>${colgroup.join('')}</colgroup><thead><tr>${head}</tr></thead><tbody>${body}</tbody>`;
}

function buildPalette() {
    const swatches = colors => colors.map(c => `<i class="swatch" style="background:${c}"></i>`).join('');
    document.getElementById('theme-row').innerHTML = swatches(themeColors);
    document.getElementById('std-row').innerHTML = swatches(standardColors);
    document.getElementById('shade-row').innerHTML = themeShades.map(col =>
        `<div class="shade-col">${col.map(c => `<i style="background:${c}"></i>`).join('')}</div>`
    ).join('');
}

buildGrid();
buildPalette();
```
